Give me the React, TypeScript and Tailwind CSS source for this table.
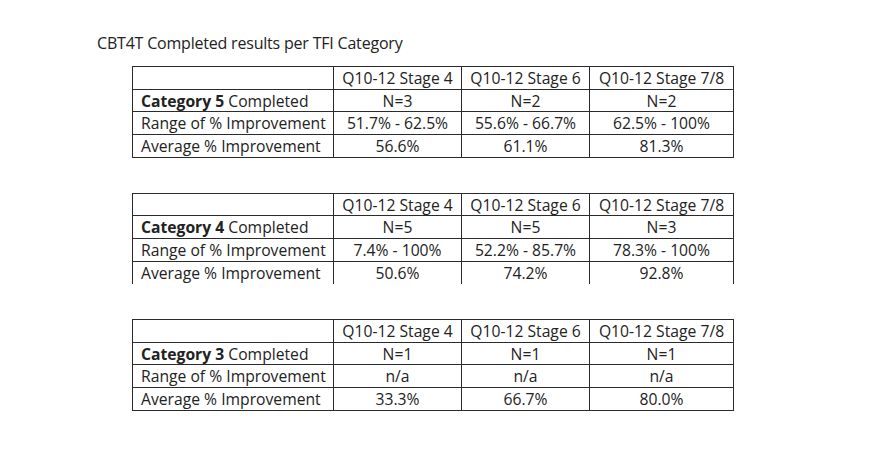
const stages = ['Q10-12 Stage 4', 'Q10-12 Stage 6', 'Q10-12 Stage 7/8'];

type Block = {
  category: string;
  n: string[];
  range: string[];
  avg: string[];
  openBottom?: boolean;
};

const blocks: Block[] = [
  {
    category: 'Category 5',
    n: ['N=3', 'N=2', 'N=2'],
    range: ['51.7% - 62.5%', '55.6% - 66.7%', '62.5% - 100%'],
    avg: ['56.6%', '61.1%', '81.3%'],
  },
  {
    category: 'Category 4',
    n: ['N=5', 'N=5', 'N=3'],
    range: ['7.4% - 100%', '52.2% - 85.7%', '78.3% - 100%'],
    avg: ['50.6%', '74.2%', '92.8%'],
    openBottom: true,
  },
  {
    category: 'Category 3',
    n: ['N=1', 'N=1', 'N=1'],
    range: ['n/a', 'n/a', 'n/a'],
    avg: ['33.3%', '66.7%', '80.0%'],
  },
];

const cell = 'border border-[#2b2b2b] h-[22.7px] p-0 pt-[2px] leading-none';

function ResultTable({ block }: { block: Block }) {
  const last = block.openBottom ? 'border-b-0' : '';
  return (
    <table className="border-collapse table-fixed w-[601px] text-[15.7px] text-[#222]">
      <colgroup>
        <col className="w-[201px]" />
        <col className="w-[128px]" />
        <col className="w-[128px]" />
        <col className="w-[144px]" />
      </colgroup>
      <tbody>
        <tr>
          <td className={cell} />
          {stages.map((s) => (
            <td key={s} className={`${cell} text-center`}>{s}</td>
          ))}
        </tr>
        <tr>
          <td className={`${cell} pl-[8px]`}>
            <span className="font-bold">{block.category}</span> Completed
          </td>
          {block.n.map((v, i) => (
            <td key={i} className={`${cell} text-center`}>{v}</td>
          ))}
        </tr>
        <tr>
          <td className={`${cell} pl-[8px]`}>Range of % Improvement</td>
          {block.range.map((v, i) => (
            <td key={i} className={`${cell} text-center`}>{v}</td>
          ))}
        </tr>
        <tr>
          <td className={`${cell} pl-[8px] ${last}`}>Average % Improvement</td>
          {block.avg.map((v, i) => (
            <td key={i} className={`${cell} text-center ${last}`}>{v}</td>
          ))}
        </tr>
      </tbody>
    </table>
  );
}

export default function App() {
  return (
    <div className="w-[870px] h-[457px] bg-white pl-[97px] pt-[33px] font-['Open_Sans',sans-serif]">
      <h1 className="text-[16px] leading-[20px] text-[#222] tracking-[-0.2px]">
        CBT4T Completed results per TFI Category
      </h1>
      <div className="ml-[35px] mt-[13px] flex flex-col gap-[35px]">
        {blocks.map((b) => (
          <ResultTable key={b.category} block={b} />
        ))}
      </div>
    </div>
  );
}
